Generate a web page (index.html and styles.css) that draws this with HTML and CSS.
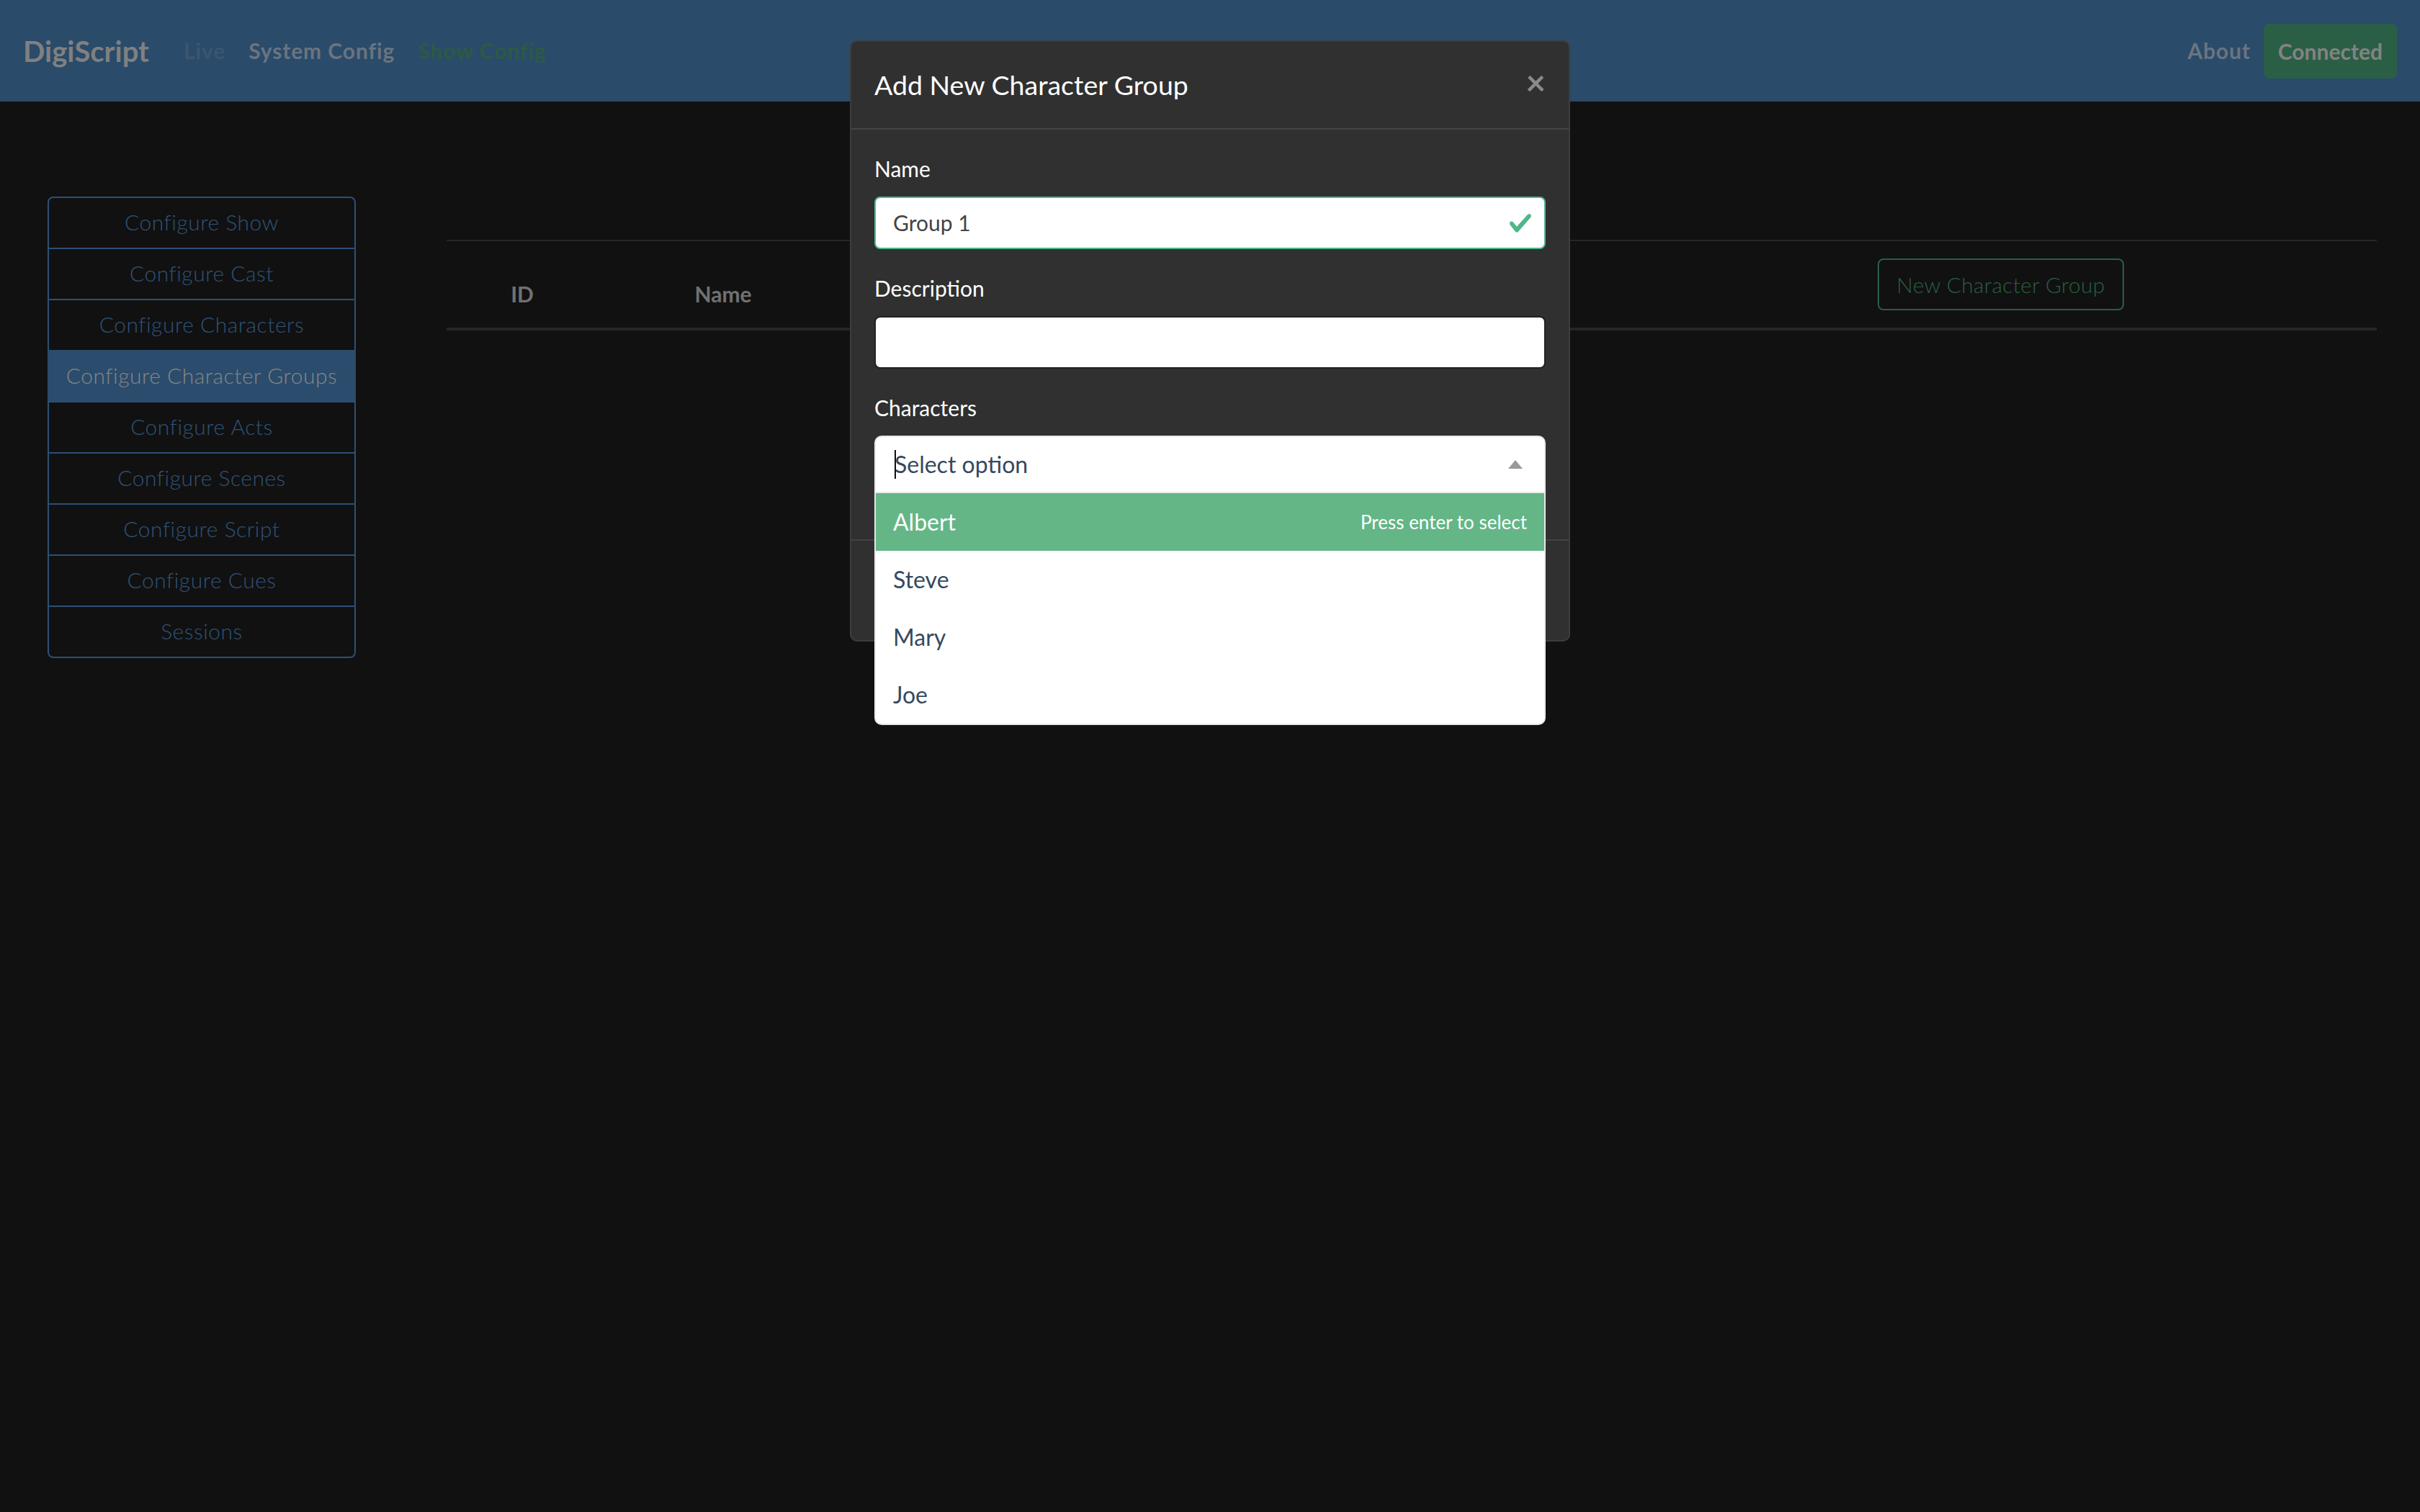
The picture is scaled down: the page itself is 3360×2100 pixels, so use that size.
FILE: index.html
```html
<!DOCTYPE html>
<html lang="en">
<head>
<meta charset="utf-8">
<title>DigiScript</title>
<link rel="stylesheet" href="styles.css">
</head>
<body>
<div class="app">
  <nav class="navbar">
    <a class="brand">DigiScript</a>
    <ul class="nav-links">
      <li class="nav-link disabled">Live</li>
      <li class="nav-link">System Config</li>
      <li class="nav-link active">Show Config</li>
    </ul>
    <div class="nav-right">
      <span class="nav-link">About</span>
      <button class="btn-connected">Connected</button>
    </div>
  </nav>
  <div class="page">
    <aside class="side-col">
      <div class="side-group">
        <a class="side-item">Configure Show</a>
        <a class="side-item">Configure Cast</a>
        <a class="side-item">Configure Characters</a>
        <a class="side-item active">Configure Character Groups</a>
        <a class="side-item">Configure Acts</a>
        <a class="side-item">Configure Scenes</a>
        <a class="side-item">Configure Script</a>
        <a class="side-item">Configure Cues</a>
        <a class="side-item">Sessions</a>
      </div>
    </aside>
    <section class="content-col">
      <table class="table">
        <colgroup>
          <col class="c-id">
          <col class="c-name">
          <col class="c-desc">
          <col class="c-act">
        </colgroup>
        <thead>
          <tr>
            <th>ID</th>
            <th>Name</th>
            <th>Description</th>
            <th><button class="btn-outline-success">New Character Group</button></th>
          </tr>
        </thead>
      </table>
    </section>
  </div>
</div>

<div class="modal">
  <div class="modal-dialog">
    <div class="modal-content">
      <header class="modal-header">
        <h5 class="modal-title">Add New Character Group</h5>
        <button class="close">×</button>
      </header>
      <div class="modal-body">
        <div class="form-group">
          <label class="form-label">Name</label>
          <div class="form-control is-valid">
            <span class="fc-text">Group 1</span>
            <svg class="valid-icon" viewBox="0 0 8 8" width="17" height="17"><path fill="#50b68a" d="M2.3 6.73L.6 4.53c-.4-1.04.46-1.4 1.1-.8l1.1 1.4 3.4-3.8c.6-.63 1.6-.27 1.2.7l-4 4.6c-.43.5-.8.4-1.1.1z"/></svg>
          </div>
        </div>
        <div class="form-group">
          <label class="form-label">Description</label>
          <div class="form-control"></div>
        </div>
        <div class="form-group">
          <label class="form-label">Characters</label>
          <div class="multiselect">
            <div class="ms-tags">
              <span class="ms-input">Select option</span>
            </div>
            <div class="ms-select"></div>
            <ul class="ms-content">
              <li class="ms-option highlight"><span>Albert</span><span class="ms-hint">Press enter to select</span></li>
              <li class="ms-option"><span>Steve</span></li>
              <li class="ms-option"><span>Mary</span></li>
              <li class="ms-option"><span>Joe</span></li>
            </ul>
          </div>
        </div>
      </div>
      <footer class="modal-footer">
        <button class="btn btn-secondary">Cancel</button>
        <button class="btn btn-primary">OK</button>
      </footer>
    </div>
  </div>
</div>
</body>
</html>
```

FILE: styles.css
```css
* { box-sizing: border-box; }
html { zoom: 2; }
body {
  margin: 0;
  height: 1050px;
  overflow: hidden;
  background: #111111;
  font-family: Lato, "Liberation Sans", sans-serif;
  font-size: 15px;
  line-height: 1.5;
  color: #808080;
}

/* navbar */
.navbar {
  display: flex;
  align-items: center;
  height: 70.5px;
  padding: 16px;
  background: #2a4b6a;
}
.brand {
  font-size: 20px;
  font-weight: 700;
  color: #808080;
  line-height: 30px;
  margin-right: 16px;
}
.nav-links {
  display: flex;
  list-style: none;
  margin: 0;
  padding: 0;
}
.nav-link {
  padding: 8px;
  font-weight: 700;
  letter-spacing: 0.45px;
  color: #6a7480;
}
.nav-link.disabled { color: #3a5671; }
.nav-link.active { color: #2c5a44; }
.nav-right {
  margin-left: auto;
  display: flex;
  align-items: center;
}
.btn-connected {
  height: 38px;
  padding: 0 10px;
  margin-left: 1px;
  border: 0;
  border-radius: 4px;
  background: #2b5f45;
  color: #838383;
  font-family: Lato, "Liberation Sans", sans-serif;
  font-size: 15px;
  font-weight: 700;
}

/* page */
.page { display: flex; }
.side-col {
  width: 280px;
  display: flex;
  justify-content: center;
  padding-top: 66px;
}
.side-group {
  width: 214px;
  display: flex;
  flex-direction: column;
}
.side-item {
  display: block;
  padding: 5.5px 4px 6.5px;
  margin-top: -1px;
  text-align: center;
  line-height: 22.5px;
  font-weight: 300;
  letter-spacing: 0.25px;
  color: #2f5379;
  border: 1px solid #2d5075;
}
.side-item:first-child { margin-top: 0; border-radius: 4px 4px 0 0; }
.side-item:last-child { border-radius: 0 0 4px 4px; }
.side-item.active {
  background: #2b4c6c;
  border-color: #2b4c6c;
  color: #868686;
}

.content-col {
  flex: 1;
  padding: 96px 30px 0;
}
.table {
  width: 100%;
  border-collapse: collapse;
  table-layout: fixed;
}
.c-id { width: 105px; }
.c-name { width: 174px; }
.c-desc { width: 539px; }
.table th {
  padding: 12px;
  border-top: 1px solid #262626;
  border-bottom: 2px solid #262626;
  vertical-align: bottom;
  text-align: center;
  color: #717171;
  font-weight: 700;
}
.btn-outline-success {
  height: 36px;
  padding: 0 12px;
  border: 1px solid #2a5e45;
  border-radius: 4px;
  background: transparent;
  color: #2a5e45;
  font-family: Lato, "Liberation Sans", sans-serif;
  font-size: 15px;
  font-weight: 300;
  letter-spacing: 0.15px;
  vertical-align: middle;
}

/* modal */
.modal {
  position: fixed;
  inset: 0;
  overflow: hidden;
}
.modal-dialog {
  width: 500px;
  margin: 28px auto;
}
.modal-content {
  position: relative;
  background: #303030;
  border: 1px solid #3d3d3d;
  border-radius: 5px;
  color: #fff;
}
.modal-header {
  display: flex;
  align-items: flex-start;
  padding: 17px 16px 17px;
  border-bottom: 1px solid #444;
}
.modal-title {
  margin: 0;
  font-size: 18.75px;
  font-weight: 400;
  line-height: 26px;
  color: #fff;
}
.close {
  margin-left: auto;
  margin-top: -1px;
  padding: 0;
  border: 0;
  background: transparent;
  color: #8a8a8a;
  font-family: Lato, "Liberation Sans", sans-serif;
  font-size: 24px;
  font-weight: 700;
  line-height: 1;
}
.modal-body { padding: 16px; }
.form-group { margin-bottom: 16px; }
.form-label {
  display: block;
  margin-bottom: 8px;
  color: #fff;
}
.form-control {
  display: flex;
  align-items: center;
  height: 36.5px;
  padding: 6px 12px;
  background: #fff;
  border: 1px solid #222;
  border-radius: 4px;
  color: #444;
}
.form-control.is-valid {
  border-color: #50b68a;
  padding-right: 8px;
}
.fc-text { flex: 1; }
.valid-icon { flex: none; }

.multiselect {
  position: relative;
  min-height: 40px;
  color: #35495e;
  font-size: 16px;
}
.ms-tags {
  height: 40px;
  padding: 9px 40px 0 8px;
  background: #fff;
  border: 1px solid #e8e8e8;
  border-radius: 5px 5px 0 0;
}
.ms-input {
  display: block;
  position: relative;
  padding-left: 5px;
  line-height: 20px;
}
.ms-input::before {
  content: "";
  position: absolute;
  left: 5px;
  top: 0;
  width: 1px;
  height: 20px;
  background: #111;
}
.ms-select {
  position: absolute;
  top: 1px;
  right: 1px;
  width: 40px;
  height: 38px;
  display: flex;
  align-items: center;
  justify-content: center;
}
.ms-select::before {
  content: "";
  border-style: solid;
  border-width: 0 5px 6px;
  border-color: transparent transparent #999;
}
.ms-content {
  position: absolute;
  top: 40px;
  left: 0;
  right: 0;
  z-index: 50;
  list-style: none;
  margin: 0;
  padding: 0;
  background: #fff;
  border: 1px solid #e8e8e8;
  border-top: none;
  border-radius: 0 0 5px 5px;
}
.ms-option {
  display: flex;
  justify-content: space-between;
  align-items: center;
  min-height: 40px;
  padding: 12px;
  line-height: 16px;
}
.ms-option.highlight {
  background: #64b687;
  color: #fff;
}
.ms-hint { font-size: 13px; }

.modal-footer {
  display: flex;
  justify-content: flex-end;
  padding: 12px;
  border-top: 1px solid #444;
}
.btn {
  height: 37px;
  margin: 4px;
  padding: 0 12px;
  border: 0;
  border-radius: 4px;
  font-family: Lato, "Liberation Sans", sans-serif;
  font-size: 15px;
  color: #fff;
}
.btn-secondary { background: #444; }
.btn-primary { background: #375a7f; }
```
